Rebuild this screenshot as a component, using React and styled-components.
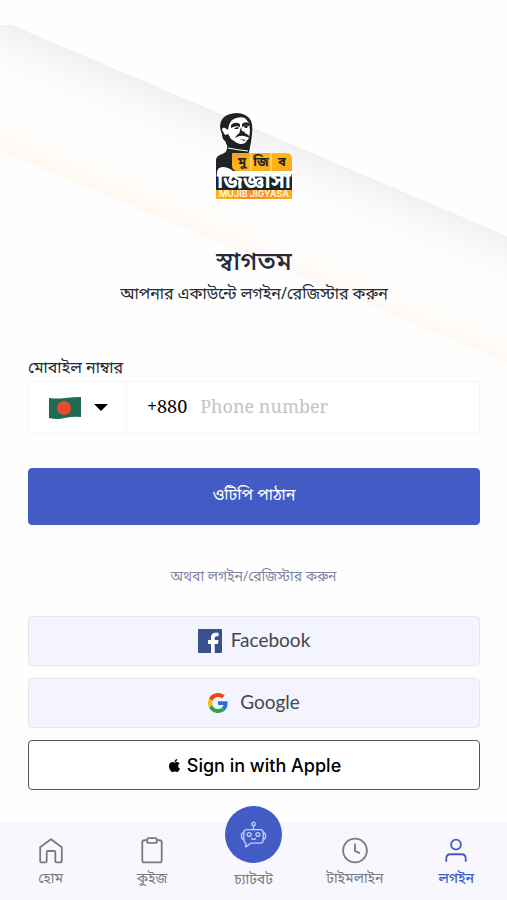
import React from "react";
import styled, { createGlobalStyle } from "styled-components";
import { FaApple } from "react-icons/fa";

function Logo() {
  return (
    <LogoSvg viewBox="0 0 76 86" role="img" aria-label="মুজিব জিজ্ঞাসা">
      <defs>
        <linearGradient id="tile" x1="0" y1="0" x2="1" y2="1">
          <stop offset="0" stopColor="#f39a22" />
          <stop offset="0.4" stopColor="#fdb813" />
          <stop offset="1" stopColor="#f8a81c" />
        </linearGradient>
        <linearGradient id="strip" x1="0" y1="0" x2="1" y2="0">
          <stop offset="0" stopColor="#fdb813" />
          <stop offset="0.5" stopColor="#f58a34" />
          <stop offset="1" stopColor="#f9b01c" />
        </linearGradient>
      </defs>
      <path
        fill="#1f2326"
        d="M0 58V47q0-4 6-6 4-1 5-5 1-4-2-8-3-2-3-7-2-4-2-8Q5 1 20 0q11 0 15 8 2 5 1 13l-1 8-2 10-8 20Z"
      />
      <path
        fill="#fff"
        d="M16 7q6-4 13-2l4 5 1 8-1 7-4 5q-4 2-8 0l-6-4-3-5-3 1-3-5q0-3 3-2l3 2 1-5q1-3 3-5Z"
      />
      <path
        fill="#1f2326"
        d="M15 12q4-4 9-1v3q-4-2-9 1ZM26 11q3-3 7-1v3q-4-1-7 1ZM18 15l5-1-1 2h-3ZM28 13h4l-1 2h-2ZM25 14l1 4 3 1-1 3-5-1ZM19 25q3-6 8-5 5 0 7 5l-6-2q-4-1-9 2ZM24 26l6 1-2 1ZM11 22q3 5 9 8 6 3 14 0l-1 8q-9-1-17-3l-6-4Z"
      />
      <path d="M12 35q10 2 20 3" stroke="#fff" strokeWidth="1" fill="none" />
      <path d="M16 40h54q6 0 6 6v12H22q-6 0-6-6Z" fill="url(#tile)" />
      <path d="M35 40v18M55 40v18" stroke="#ffe8b0" strokeWidth="1" />
      <path d="M0 58h76v19H0Z" fill="#1f2326" />
      <path d="M1 60q0-6 6-6 5 0 9 4h60v3H1Z" fill="#fff" />
      <path d="M0 77h76v9H0Z" fill="url(#strip)" />
      <LogoLetters x="26" y="53" $size={13}>মু</LogoLetters>
      <LogoLetters x="45" y="53" $size={13}>জি</LogoLetters>
      <LogoLetters x="66" y="53" $size={13}>ব</LogoLetters>
      <LogoLetters x="38" y="75" $size={22} $light>জিজ্ঞাসা</LogoLetters>
      <LogoCaption x="38" y="84">MUJIB JIGYASA</LogoCaption>
    </LogoSvg>
  );
}

function Backdrop() {
  return (
    <BackdropSvg viewBox="0 0 507 380" preserveAspectRatio="none" aria-hidden="true">
      <defs>
        <linearGradient id="shade" gradientUnits="userSpaceOnUse" x1="250" y1="126" x2="229" y2="176">
          <stop offset="0" stopColor="#f1f1f1" />
          <stop offset="0.45" stopColor="#f9f9f9" />
          <stop offset="1" stopColor="#fefefe" />
        </linearGradient>
        <linearGradient id="glow" gradientUnits="userSpaceOnUse" x1="250" y1="254" x2="268" y2="212">
          <stop offset="0" stopColor="#fff8f2" />
          <stop offset="1" stopColor="#fefefe" stopOpacity="0" />
        </linearGradient>
      </defs>
      <path d="M0 25H12L507 236V363L0 151Z" fill="url(#shade)" />
      <path d="M0 90L507 300V363L0 151Z" fill="url(#glow)" />
    </BackdropSvg>
  );
}

function Flag() {
  return (
    <svg width="34" height="26" viewBox="0 0 34 26" aria-hidden="true">
      <path d="M1 3q8 1 16 0t16-1v20q-8-1-16 1T1 23Z" fill="#1f6b50" />
      <ellipse cx="16" cy="13" rx="7" ry="7" fill="#e8492a" />
    </svg>
  );
}

function FacebookMark() {
  return (
    <svg width="24" height="24" viewBox="0 0 24 24" aria-hidden="true">
      <rect width="24" height="24" rx="1" fill="#39528c" />
      <path
        fill="#fff"
        d="M13 24v-9h-3v-4h3V8.500q0-4.700 4.800-4.700h2.700v3.500h-2q-1.800 0-1.800 1.700v2h3.800l-.5 4h-3.300v9Z"
      />
    </svg>
  );
}

function GoogleMark() {
  return (
    <svg width="20" height="20" viewBox="0 0 48 48" aria-hidden="true">
      <path fill="#f44316" d="M24 9.500c3.540 0 6.710 1.220 9.210 3.600l6.850-6.850C35.900 2.380 30.470 0 24 0 14.620 0 6.510 5.380 2.560 13.220l7.980 6.190C12.430 13.720 17.740 9.500 24 9.500z" />
      <path fill="#2a73d2" d="M46.980 24.550c0-1.570-.15-3.090-.38-4.550H24v9.020h12.940c-.58 2.960-2.260 5.480-4.780 7.180l7.730 6c4.510-4.180 7.090-10.360 7.090-17.650z" />
      <path fill="#fbbc05" d="M10.530 28.590c-.48-1.450-.76-2.990-.76-4.590s.27-3.140.76-4.590l-7.980-6.190C.92 16.460 0 20.120 0 24c0 3.880.92 7.540 2.560 10.780l7.970-6.190z" />
      <path fill="#34a048" d="M24 48c6.480 0 11.930-2.130 15.890-5.810l-7.730-6c-2.150 1.450-4.920 2.300-8.160 2.300-6.260 0-11.570-4.220-13.470-9.910l-7.980 6.190C6.510 42.620 14.620 48 24 48z" />
    </svg>
  );
}

const ICONS = {
  home: (
    <path d="M2 9.500L12 2l10 7.500V22q0 1.500-1.500 1.500H17q-1 0-1-1V14q0-1-1-1H9q-1 0-1 1v8.500q0 1-1 1H3.500Q2 23.500 2 22Z" />
  ),
  quiz: (
    <>
      <path d="M8 3H5Q3 3 3 5v16.500q0 2 2 2h14q2 0 2-2V5q0-2-2-2h-3" />
      <rect x="7.500" y="1" width="9" height="4.500" rx="1.500" />
    </>
  ),
  time: (
    <>
      <circle cx="12" cy="12.500" r="11" />
      <path d="M12 6v7l4.500 2" />
    </>
  ),
  login: (
    <>
      <circle cx="12" cy="7" r="4.500" />
      <path d="M3 23v-3q0-4 4-4h10q4 0 4 4v3" />
    </>
  ),
};

function RobotIcon() {
  return (
    <svg
      width="27"
      height="27"
      viewBox="0 0 28 28"
      fill="none"
      stroke="#c3cefa"
      strokeWidth="1.400"
      strokeLinejoin="round"
      aria-hidden="true"
    >
      <circle cx="14" cy="3" r="1.800" />
      <path d="M14 5v4M7 9h14q3 0 3 3v8q0 3-3 3H11l-5 4v-4q-2-1-2-3v-8q0-3 3-3ZM4 12q-2.500 0-2.500 3.500T4 19M24 12q2.500 0 2.500 3.500T24 19" />
      <circle cx="9.500" cy="14" r="2" />
      <circle cx="18.500" cy="14" r="2" />
      <path d="M11.500 18q2.500 2 5 0" />
    </svg>
  );
}

function NavItem({ icon, active, children }) {
  return (
    <NavLink href="#" $active={active} aria-current={active ? "page" : undefined}>
      <NavIcon viewBox="0 0 24 25" aria-hidden="true">{ICONS[icon]}</NavIcon>
      {children}
    </NavLink>
  );
}

function App() {
  return (
    <Page>
      <GlobalStyle />
      <Backdrop />
      <Main>
        <Logo />
        <Title>স্বাগতম</Title>
        <Subtitle>আপনার একাউন্টে লগইন/রেজিস্টার করুন</Subtitle>
        <Form onSubmit={(e) => e.preventDefault()}>
          <Label htmlFor="phone">মোবাইল নাম্বার</Label>
          <PhoneField>
            <CountryButton type="button" aria-label="Bangladesh +880">
              <Flag />
              <Caret />
            </CountryButton>
            <DialCode>+880</DialCode>
            <PhoneInput id="phone" type="tel" placeholder="Phone number" />
          </PhoneField>
          <SubmitButton type="submit">ওটিপি পাঠান</SubmitButton>
        </Form>
        <Divider>অথবা লগইন/রেজিস্টার করুন</Divider>
        <Providers>
          <ProviderButton type="button">
            <FacebookMark />
            <ProviderName>Facebook</ProviderName>
          </ProviderButton>
          <ProviderButton type="button" $gap={12}>
            <GoogleMark />
            <ProviderName>Google</ProviderName>
          </ProviderButton>
          <AppleButton type="button">
            <FaApple size={15} aria-hidden="true" />
            Sign in with Apple
          </AppleButton>
        </Providers>
      </Main>
      <Nav>
        <NavItem icon="home">হোম</NavItem>
        <NavItem icon="quiz">কুইজ</NavItem>
        <ChatLink href="#">
          <ChatCircle>
            <RobotIcon />
          </ChatCircle>
          চ্যাটবট
        </ChatLink>
        <NavItem icon="time">টাইমলাইন</NavItem>
        <NavItem icon="login" active>লগইন</NavItem>
      </Nav>
    </Page>
  );
}

const BENGALI = `"Noto Sans", "Noto Sans Bengali", sans-serif`;

const GlobalStyle = createGlobalStyle`
  *, *::before, *::after {
    box-sizing: border-box;
  }

  body {
    margin: 0;
    background: #fefefe;
    color: #262b3a;
    font-family: ${BENGALI};
  }

  button, input {
    font: inherit;
  }
`;

const Page = styled.div`
  position: relative;
  min-height: 100vh;
  display: flex;
  flex-direction: column;
`;

const BackdropSvg = styled.svg`
  position: absolute;
  inset: 0 0 auto;
  width: 100%;
  height: 380px;
  z-index: -1;
`;

const Main = styled.main`
  flex: 1;
  display: flex;
  flex-direction: column;
  padding: 113px 27px 32px 28px;
`;

const LogoSvg = styled.svg`
  width: 76px;
  height: 86px;
  align-self: center;
`;

const LogoLetters = styled.text`
  font-family: ${BENGALI};
  font-size: ${(p) => p.$size}px;
  font-weight: 700;
  text-anchor: middle;
  fill: ${(p) => (p.$light ? "#fff" : "#1f2326")};
`;

const LogoCaption = styled.text`
  font-family: Inter, sans-serif;
  font-size: 9px;
  font-weight: 700;
  text-anchor: middle;
  fill: #fff3d0;
`;

const Title = styled.h1`
  margin: 43px 0 0;
  font-size: 26px;
  line-height: 36px;
  font-weight: 500;
  text-align: center;
`;

const Subtitle = styled.p`
  margin: 0;
  font-size: 16px;
  line-height: 30px;
  text-align: center;
`;

const Form = styled.form`
  display: flex;
  flex-direction: column;
  margin-top: 45px;
`;

const Label = styled.label`
  font-size: 16px;
  line-height: 28px;
`;

const PhoneField = styled.div`
  display: flex;
  align-items: center;
  height: 53px;
  background: #fff;
  border: 1px solid #f5f5f6;
  font-family: "Noto Serif", "DejaVu Serif", serif;
  font-size: 18px;
`;

const CountryButton = styled.button`
  display: flex;
  align-items: center;
  justify-content: center;
  gap: 12px;
  width: 98px;
  height: 100%;
  padding: 0;
  border: 0;
  border-right: 1px solid #f5f5f6;
  background: none;
`;

const Caret = styled.span`
  border: 7px solid transparent;
  border-top-color: #000;
  border-bottom: 0;
`;

const DialCode = styled.span`
  margin-left: 20px;
  padding-bottom: 4px;
  color: #000;
`;

const PhoneInput = styled.input`
  flex: 1;
  min-width: 0;
  padding: 0 12px 4px 13px;
  border: 0;
  outline: 0;
  background: none;

  &::placeholder {
    color: #c4c4c4;
  }
`;

const SubmitButton = styled.button`
  height: 57px;
  margin-top: 34px;
  padding-bottom: 4px;
  border: 1px solid #435bc5;
  border-radius: 4px;
  background: #435bc5;
  color: #fff;
  font-size: 16px;
`;

const Divider = styled.div`
  display: flex;
  align-items: center;
  gap: 12px;
  margin: 36px -27px 0 -28px;
  color: #8287a3;
  font-size: 14px;
  line-height: 30px;

  &::before, &::after {
    content: "";
    flex: 1;
    height: 1px;
    background: #f9f9fa;
  }
`;

const Providers = styled.div`
  display: flex;
  flex-direction: column;
  gap: 12px;
  margin-top: 25px;
`;

const ProviderButton = styled.button`
  display: flex;
  align-items: center;
  justify-content: center;
  gap: ${(p) => p.$gap ?? 9}px;
  height: 50px;
  border: 1px solid #e4e6ee;
  border-radius: 4px;
  background: #f3f4fd;
  color: #43464f;
  font-family: Lato, sans-serif;
  font-size: 19px;
`;

const ProviderName = styled.span`
  padding-bottom: 4px;
`;

const AppleButton = styled(ProviderButton)`
  gap: 5px;
  border-color: #555;
  background: #fff;
  color: #000;
  font-family: Inter, sans-serif;
  font-size: 18px;
  font-weight: 500;
`;

const Nav = styled.nav`
  display: grid;
  grid-template-columns: repeat(5, 1fr);
  height: 78px;
  background: #f7f7fd;
`;

const NavLink = styled.a`
  display: flex;
  flex-direction: column;
  align-items: center;
  padding-top: 15px;
  color: ${(p) => (p.$active ? "#435bc5" : "#7b7b80")};
  font-size: 14px;
  font-weight: ${(p) => (p.$active ? 500 : 400)};
  line-height: 28px;
  text-decoration: none;
`;

const NavIcon = styled.svg`
  width: 26px;
  height: 27px;
  fill: none;
  stroke: currentColor;
  stroke-width: 1.700;
  stroke-linejoin: round;
`;

const ChatLink = styled(NavLink)`
  padding-top: 0;
  margin-top: -16px;
`;

const ChatCircle = styled.span`
  display: grid;
  place-items: center;
  width: 57px;
  height: 57px;
  margin-bottom: 2px;
  border-radius: 50%;
  background: #435bc5;
`;

export default App;
